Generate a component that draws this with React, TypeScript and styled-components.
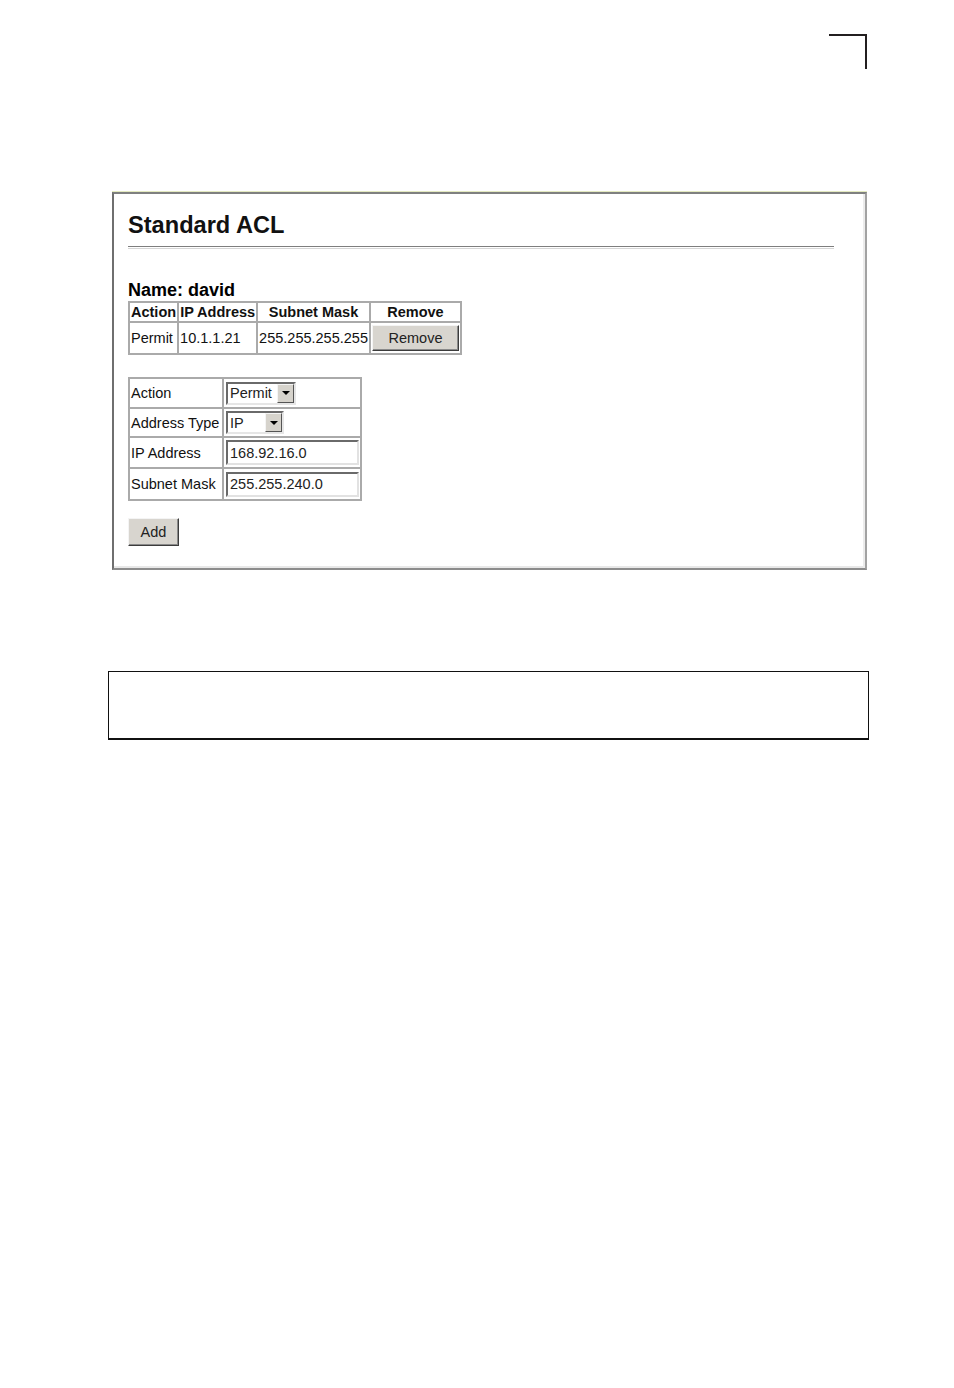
import React from "react"
import styled, { createGlobalStyle } from "styled-components"

const GlobalStyle = createGlobalStyle`
  body {
    margin: 0;
    background: #ffffff;
    font-family: "Liberation Sans", Arial, sans-serif;
  }
`

const Page = styled.div`
  width: 954px;
  min-height: 1388px;
  padding-top: 34px;
  box-sizing: border-box;
  display: flex;
  flex-direction: column;
`
const CornerMark = styled.div`
  align-self: flex-end;
  margin-right: 87px;
  width: 38px;
  height: 35px;
  border-top: 2px solid #231f20;
  border-right: 2px solid #231f20;
  box-sizing: border-box;
`
const Frame = styled.div`
  margin: 123px 0 0 112px;
  width: 755px;
  height: 378px;
  box-sizing: border-box;
  border-top: 2px solid #7f8080;
  border-left: 2px solid #6f6f6f;
  border-right: 2px solid #a2a2a2;
  border-bottom: 2px solid #8c8c8c;
  box-shadow: 0 -1px 0 #e4eac0, inset -2px 0 0 #ececec, inset 0 -2px 0 #e8e8e8;
  padding: 17px 31px 0 14px;
  color: #000;
`
const Title = styled.h1`
  margin: 0;
  font-size: 23.6px;
  line-height: 28px;
  font-weight: bold;
  color: #111;
`
const Rule = styled.div`
  margin-top: 7px;
  height: 1px;
  border-top: 1px solid #7e7e7e;
  border-bottom: 1px solid #d6d6d6;
`
const Name = styled.div`
  margin-top: 30px;
  font-size: 18px;
  line-height: 22px;
  font-weight: bold;
`
const Grid = styled.table<{ $top: number }>`
  margin-top: ${(p) => p.$top}px;
  border-collapse: collapse;
  border: 2px solid #b4b4b4;
  font-size: 14.5px;
  color: #111;
`
const Head = styled.th<{ $w: number }>`
  width: ${(p) => p.$w}px;
  height: 20px;
  padding: 0 1px;
  border: 2px solid #aaaaaa;
  font-weight: bold;
  white-space: nowrap;
  text-align: center;
  box-sizing: border-box;
`
const Cell = styled.td<{ $h?: number }>`
  height: ${(p) => p.$h ?? 30}px;
  padding: 0 1px;
  border: 2px solid #aaaaaa;
  white-space: nowrap;
  box-sizing: border-box;
  vertical-align: middle;
`
const FieldLabel = styled(Cell)<{ $w?: number }>`
  width: ${(p) => p.$w ?? 94}px;
`
const Button = styled.button<{ $w: number; $h: number }>`
  width: ${(p) => p.$w}px;
  height: ${(p) => p.$h}px;
  padding: 0;
  font-family: "Liberation Sans", Arial, sans-serif;
  font-size: 14.5px;
  color: #222;
  background: #d8d5cf;
  border: 1px solid;
  border-color: #f4f4f4 #3c3c3c #3c3c3c #f4f4f4;
  box-shadow: inset -1px -1px 0 #8a8a8a;
  display: flex;
  align-items: center;
  justify-content: center;
`
const Select = styled.div<{ $w: number }>`
  width: ${(p) => p.$w}px;
  height: 23px;
  box-sizing: border-box;
  border: 2px solid;
  border-color: #6a6a6a #e6e6e6 #e6e6e6 #6a6a6a;
  background: #fff;
  display: flex;
  align-items: center;
  justify-content: space-between;
  padding-left: 2px;
  font-size: 14.5px;
  color: #222;
  margin-left: 1px;
`
const Arrow = styled.div`
  width: 17px;
  height: 19px;
  box-sizing: border-box;
  background: #d6d3cc;
  border: 1px solid;
  border-color: #f4f4f4 #555 #555 #f4f4f4;
  display: flex;
  align-items: center;
  justify-content: center;
  &::after {
    content: "";
    border-left: 4px solid transparent;
    border-right: 4px solid transparent;
    border-top: 4px solid #000;
  }
`
const TextBox = styled.div`
  width: 133px;
  height: 25px;
  box-sizing: border-box;
  margin-left: 1px;
  border: 2px solid;
  border-color: #6a6a6a #e2e2e2 #e2e2e2 #6a6a6a;
  padding-left: 2px;
  display: flex;
  align-items: center;
  font-size: 14.5px;
  color: #222;
`
const AddRow = styled.div`
  margin-top: 17px;
`
const Note = styled.div`
  margin: 101px 0 0 108px;
  width: 761px;
  height: 69px;
  box-sizing: border-box;
  border: 1px solid #111;
  border-bottom-width: 2px;
`

export default function App() {
  return (
    <>
      <GlobalStyle />
      <Page>
        <CornerMark />
        <Frame>
          <Title>Standard ACL</Title>
          <Rule />
          <Name>Name: david</Name>
          <Grid $top={0}>
            <thead>
              <tr>
                <Head $w={49}>Action</Head>
                <Head $w={79}>IP Address</Head>
                <Head $w={111}>Subnet Mask</Head>
                <Head $w={91}>Remove</Head>
              </tr>
            </thead>
            <tbody>
              <tr>
                <Cell $h={32}>Permit</Cell>
                <Cell $h={32}>10.1.1.21</Cell>
                <Cell $h={32}>255.255.255.255</Cell>
                <Cell $h={32}>
                  <Button $w={87} $h={26}>Remove</Button>
                </Cell>
              </tr>
            </tbody>
          </Grid>
          <Grid $top={22}>
            <tbody>
              <tr>
                <FieldLabel $h={30}>Action</FieldLabel>
                <Cell $h={30} style={{ width: 137 }}>
                  <Select $w={70}>
                    Permit
                    <Arrow />
                  </Select>
                </Cell>
              </tr>
              <tr>
                <FieldLabel $h={29}>Address Type</FieldLabel>
                <Cell $h={29}>
                  <Select $w={58}>
                    IP
                    <Arrow />
                  </Select>
                </Cell>
              </tr>
              <tr>
                <FieldLabel $h={31}>IP Address</FieldLabel>
                <Cell $h={31}>
                  <TextBox>168.92.16.0</TextBox>
                </Cell>
              </tr>
              <tr>
                <FieldLabel $h={32}>Subnet Mask</FieldLabel>
                <Cell $h={32}>
                  <TextBox>255.255.240.0</TextBox>
                </Cell>
              </tr>
            </tbody>
          </Grid>
          <AddRow>
            <Button $w={51} $h={28}>Add</Button>
          </AddRow>
        </Frame>
        <Note />
      </Page>
    </>
  )
}
